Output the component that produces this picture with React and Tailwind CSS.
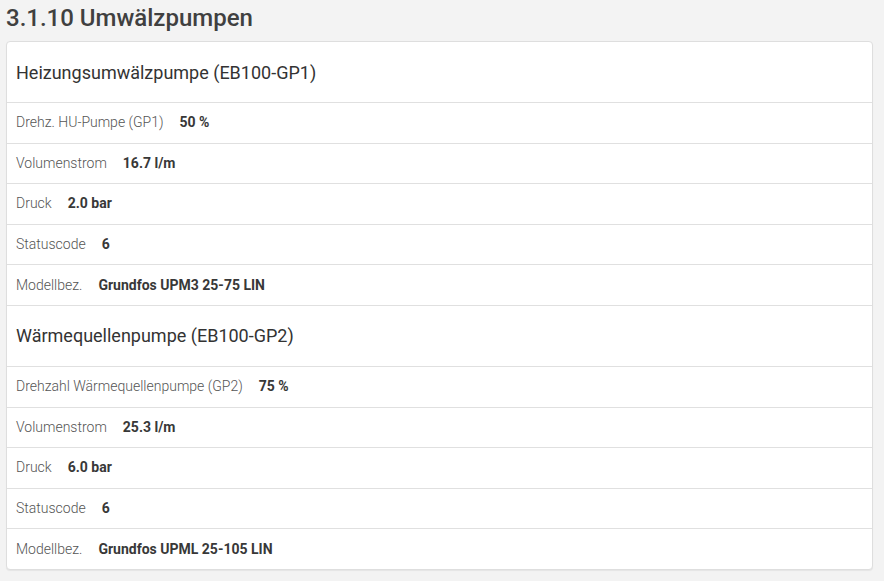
const sections = [
  {
    title: 'Heizungsumwälzpumpe (EB100-GP1)',
    rows: [
      ['Drehz. HU-Pumpe (GP1)', '50 %'],
      ['Volumenstrom', '16.7 l/m'],
      ['Druck', '2.0 bar'],
      ['Statuscode', '6'],
      ['Modellbez.', 'Grundfos UPM3 25-75 LIN'],
    ],
  },
  {
    title: 'Wärmequellenpumpe (EB100-GP2)',
    rows: [
      ['Drehzahl Wärmequellenpumpe (GP2)', '75 %'],
      ['Volumenstrom', '25.3 l/m'],
      ['Druck', '6.0 bar'],
      ['Statuscode', '6'],
      ['Modellbez.', 'Grundfos UPML 25-105 LIN'],
    ],
  },
];

export default function App() {
  return (
    <div
      className="w-[884px] h-[581px] bg-[#f3f3f3] overflow-hidden"
      style={{ fontFamily: 'Roboto, "Liberation Sans", sans-serif' }}
    >
      <h1 className="pl-[6px] h-[41px] pt-[3px] text-[24px] leading-[30px] font-medium text-[#404040]">
        3.1.10 Umwälzpumpen
      </h1>
      <div className="ml-[6px] mr-[11px] bg-white border border-[#dedede] rounded-[4px] shadow-[0_1px_1px_rgba(0,0,0,0.06)]">
        {sections.map((s, i) => (
          <div key={s.title} className={i > 0 ? 'border-t border-[#e0e0e0]' : ''}>
            {/* Section header */}
            <div className="flex items-center h-[60px] px-[9px] text-[18px] text-[#333]">
              {s.title}
            </div>
            {s.rows.map(([label, value]) => (
              <div
                key={label}
                className="flex items-center h-[40.6px] px-[9px] border-t border-[#e0e0e0] text-[14px]"
              >
                <span className="font-light text-[#555]">{label}</span>
                <span className="ml-[16px] font-bold text-[#383838]">{value}</span>
              </div>
            ))}
          </div>
        ))}
      </div>
    </div>
  );
}
